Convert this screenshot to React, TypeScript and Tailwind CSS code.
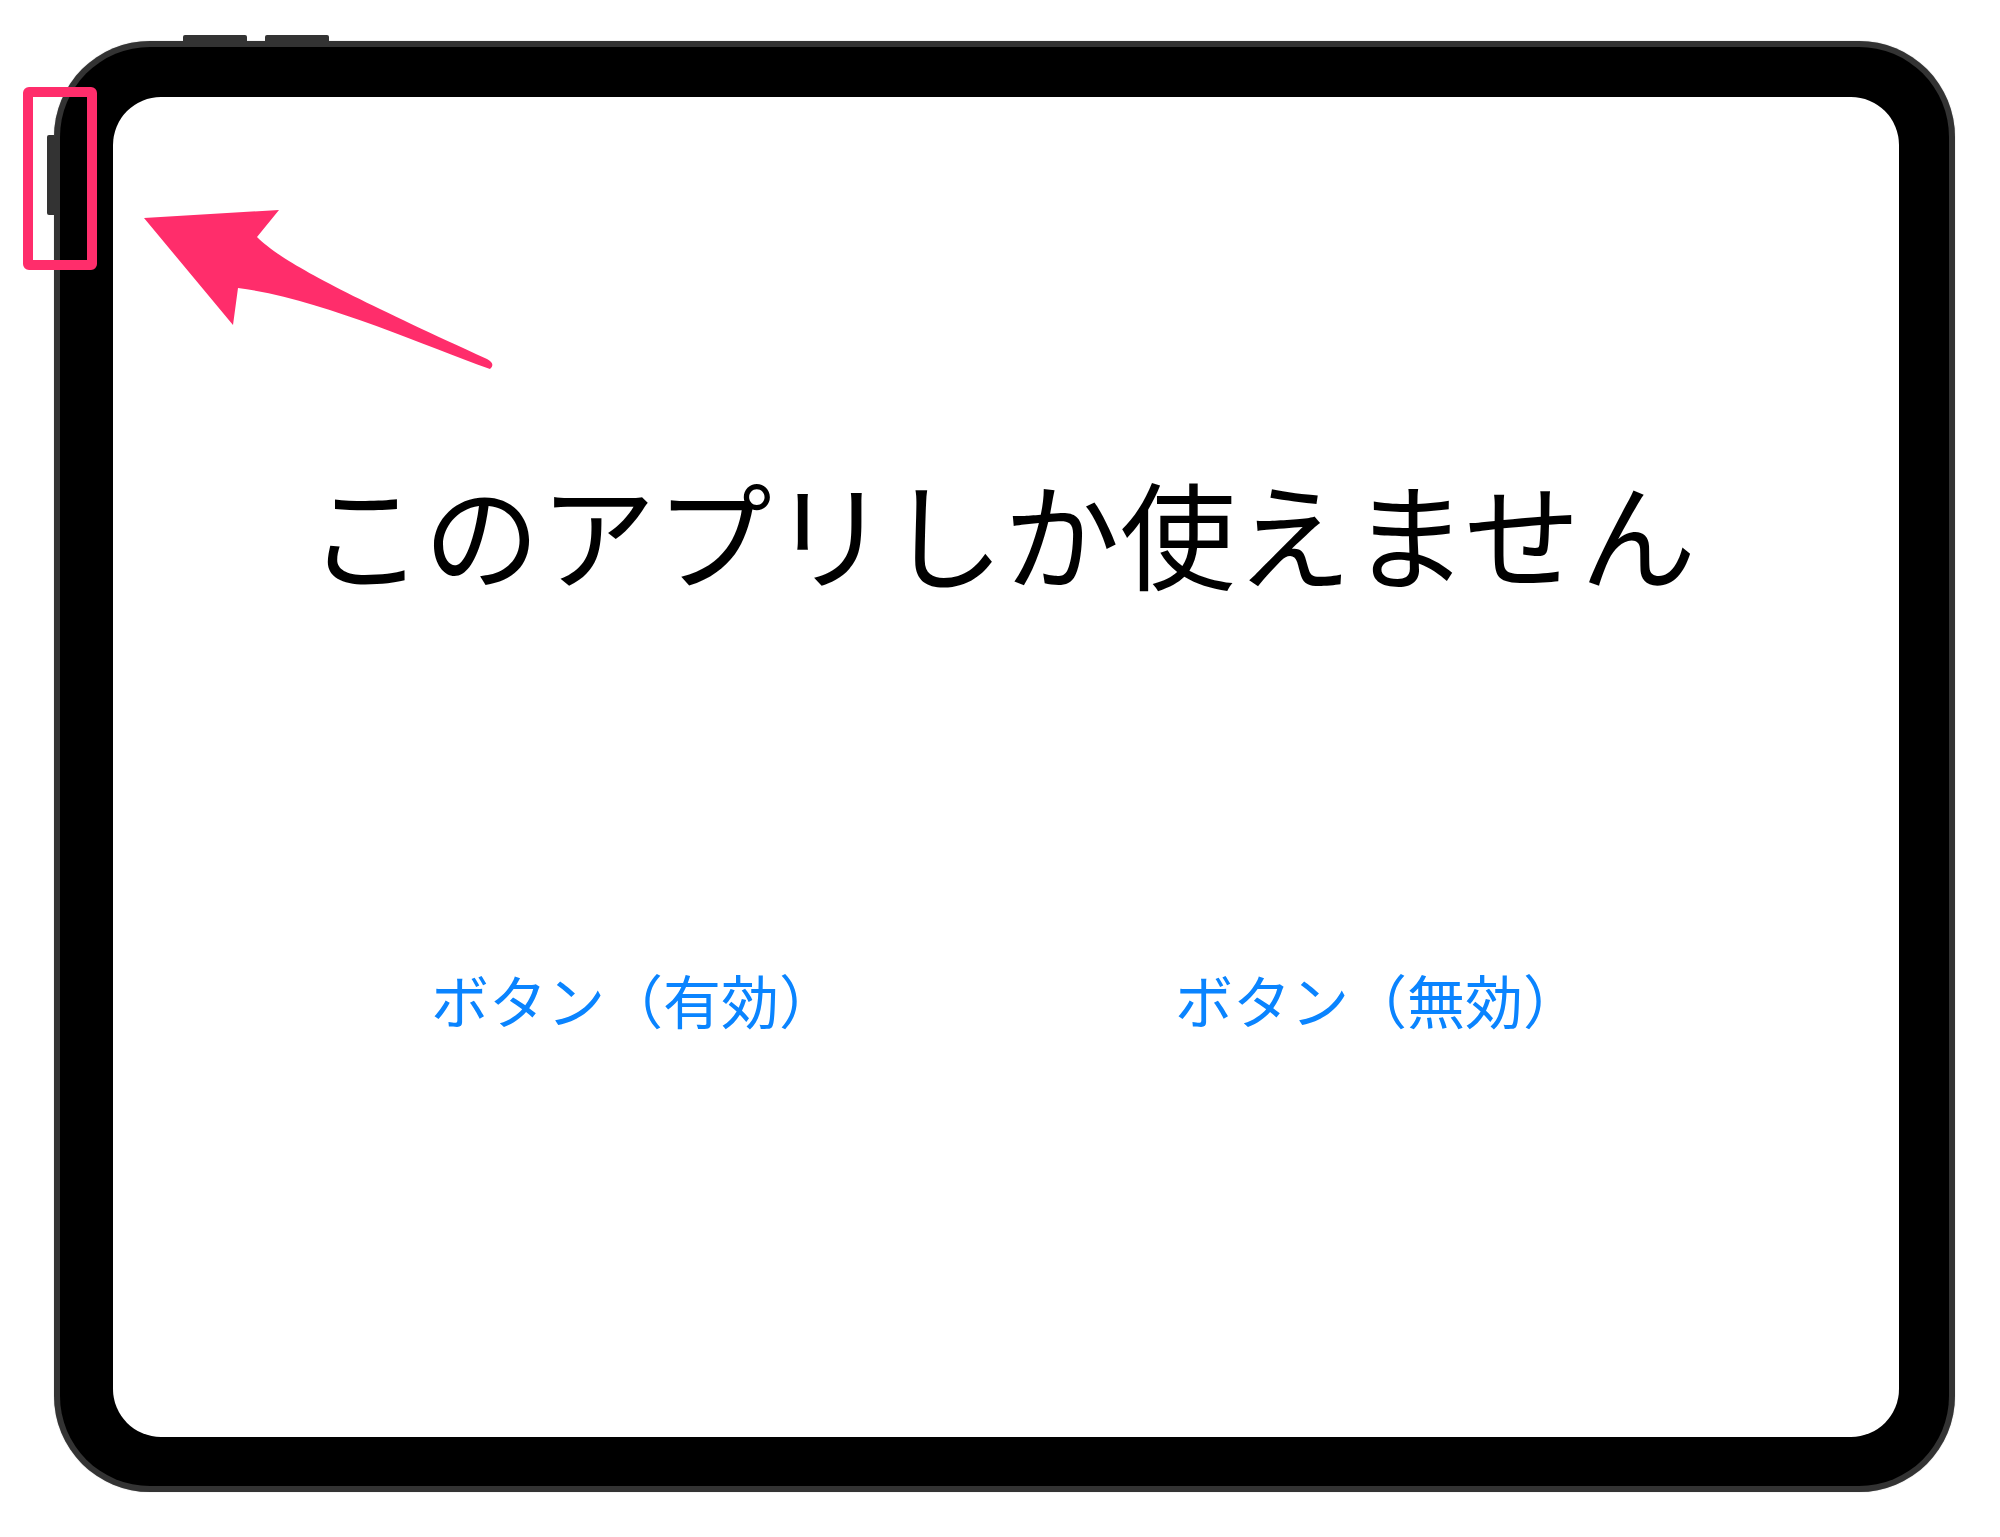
import React from 'react';

const jp = { fontFamily: '"Noto Sans CJK JP", "Noto Sans", sans-serif' };

const Arrow = () => (
  <svg
    className="pointer-events-none absolute left-0 top-0"
    width="600"
    height="420"
    viewBox="0 0 600 420"
  >
    <path
      d="M144 218 L279 210 L257 237 C282 262 345 294 487 359 Q496 364 490 369 C420 344 318 298 238 288 L233 325 Z"
      fill="#ff2d6b"
    />
  </svg>
);

export default function App() {
  return (
    <div className="relative min-h-[1537px] w-[2000px] bg-white" style={jp}>
      <div className="pl-[54px] pt-[41px]">
        <div className="relative h-[1451px] w-[1901px]">
          {/* hardware buttons */}
          <div className="absolute left-[129px] top-[-6px] h-[6px] w-[64px] rounded-t-[2px] bg-[#333]" />
          <div className="absolute left-[211px] top-[-6px] h-[6px] w-[64px] rounded-t-[2px] bg-[#333]" />
          <div className="absolute left-[-7px] top-[94px] h-[80px] w-[7px] rounded-l-[2px] bg-[#333]" />

          <div className="h-full w-full rounded-[96px] bg-[#333] p-[6px] shadow-[0_0_1px_rgba(0,0,0,0.4)]">
            <div className="flex h-full w-full rounded-[90px] bg-black pb-[49px] pl-[53px] pr-[50px] pt-[50px]">
              <div className="flex flex-1 flex-col items-center rounded-[48px] bg-white pt-[375px]">
                <h1 className="pr-[8px] text-[116px] font-normal leading-none text-black">
                  このアプリしか使えません
                </h1>
                <div className="mt-[382px] flex gap-[338px] text-[58px] leading-none text-[#0a84ff]">
                  <button className="leading-none">ボタン（有効）</button>
                  <button className="leading-none">ボタン（無効）</button>
                </div>
              </div>
            </div>
          </div>
        </div>
      </div>

      {/* annotation */}
      <div className="pointer-events-none absolute left-[23px] top-[87px] h-[183px] w-[74px] rounded-[6px] border-[10px] border-[#ff2d6b]" />
      <Arrow />
    </div>
  );
}
